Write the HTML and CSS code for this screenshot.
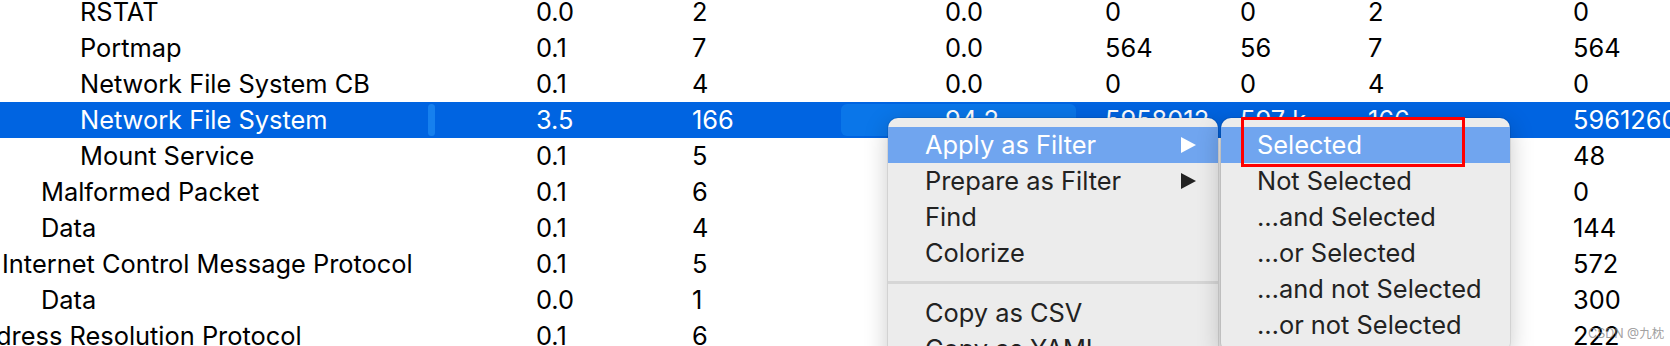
FILE: index.html
```html
<!DOCTYPE html>
<html lang="en">
    <head>
        <meta charset="UTF-8" />
        <link rel="stylesheet" href="styles.css">
        <title>Protocol Hierarchy</title>
    </head>

    <body>
        <section class="tree">
            <div class="row">
                <div class="cell name l3">RSTAT</div>
                <div class="cell">0.0</div>
                <div class="cell">2</div>
                <div class="cell pb">0.0</div>
                <div class="cell">0</div>
                <div class="cell">0</div>
                <div class="cell">2</div>
                <div class="cell">0</div>
            </div>
            <div class="row">
                <div class="cell name l3">Portmap</div>
                <div class="cell">0.1</div>
                <div class="cell">7</div>
                <div class="cell pb">0.0</div>
                <div class="cell">564</div>
                <div class="cell">56</div>
                <div class="cell">7</div>
                <div class="cell">564</div>
            </div>
            <div class="row">
                <div class="cell name l3">Network File System CB</div>
                <div class="cell">0.1</div>
                <div class="cell">4</div>
                <div class="cell pb">0.0</div>
                <div class="cell">0</div>
                <div class="cell">0</div>
                <div class="cell">4</div>
                <div class="cell">0</div>
            </div>
            <div class="row selected">
                <div class="cell name l3">Network File System<span class="handle"></span></div>
                <div class="cell">3.5</div>
                <div class="cell">166</div>
                <div class="cell pb focus">94.2</div>
                <div class="cell">5958012</div>
                <div class="cell">597 k</div>
                <div class="cell">166</div>
                <div class="cell">5961260</div>
            </div>
            <div class="row">
                <div class="cell name l3">Mount Service</div>
                <div class="cell">0.1</div>
                <div class="cell">5</div>
                <div class="cell pb">0.0</div>
                <div class="cell">48</div>
                <div class="cell">0</div>
                <div class="cell">5</div>
                <div class="cell">48</div>
            </div>
            <div class="row">
                <div class="cell name l2">Malformed Packet</div>
                <div class="cell">0.1</div>
                <div class="cell">6</div>
                <div class="cell pb">0.0</div>
                <div class="cell">0</div>
                <div class="cell">0</div>
                <div class="cell">6</div>
                <div class="cell">0</div>
            </div>
            <div class="row">
                <div class="cell name l2">Data</div>
                <div class="cell">0.1</div>
                <div class="cell">4</div>
                <div class="cell pb">0.0</div>
                <div class="cell">144</div>
                <div class="cell">0</div>
                <div class="cell">4</div>
                <div class="cell">144</div>
            </div>
            <div class="row">
                <div class="cell name l1">Internet Control Message Protocol</div>
                <div class="cell">0.1</div>
                <div class="cell">5</div>
                <div class="cell pb">0.0</div>
                <div class="cell">572</div>
                <div class="cell">0</div>
                <div class="cell">5</div>
                <div class="cell">572</div>
            </div>
            <div class="row">
                <div class="cell name l2">Data</div>
                <div class="cell">0.0</div>
                <div class="cell">1</div>
                <div class="cell pb">0.0</div>
                <div class="cell">300</div>
                <div class="cell">0</div>
                <div class="cell">1</div>
                <div class="cell">300</div>
            </div>
            <div class="row">
                <div class="cell name l0">Address Resolution Protocol</div>
                <div class="cell">0.1</div>
                <div class="cell">6</div>
                <div class="cell pb">0.0</div>
                <div class="cell">222</div>
                <div class="cell">0</div>
                <div class="cell">6</div>
                <div class="cell">222</div>
            </div>
        </section>

        <ul class="menu main-menu">
            <li class="active">Apply as Filter <svg class="arrow" width="15" height="16" viewBox="0 0 15 16"><polygon points="0,0 15,8 0,16" /></svg></li>
            <li>Prepare as Filter <svg class="arrow" width="15" height="16" viewBox="0 0 15 16"><polygon points="0,0 15,8 0,16" /></svg></li>
            <li>Find</li>
            <li>Colorize</li>
            <li class="separator"></li>
            <li>Copy as CSV</li>
            <li>Copy as YAML</li>
        </ul>

        <ul class="menu sub-menu">
            <li class="active">Selected</li>
            <li>Not Selected</li>
            <li>…and Selected</li>
            <li>…or Selected</li>
            <li>…and not Selected</li>
            <li>…or not Selected</li>
        </ul>

        <div class="mark"></div>
        <div class="watermark">CSDN @九枕</div>
    </body>
</html>
```

FILE: styles.css
```css
html,
body {
    margin: 0;
    padding: 0;
    width: 1670px;
    height: 346px;
    overflow: hidden;
    background-color: white;
}

body {
    font-family: Inter, "Liberation Sans", "Noto Sans CJK SC", sans-serif;
    font-size: 25.4px;
    color: black;
    position: relative;
}

.tree {
    margin-top: -6px;
}

.row {
    display: grid;
    grid-template-columns: 536px 156px 149px 264px 135px 128px 205px 1fr;
    height: 36px;
    line-height: 36px;
    white-space: nowrap;
}

.row.selected {
    background-color: #0064e1;
    color: white;
}

.cell {
    position: relative;
}

.cell.pb {
    padding-left: 104px;
}

.cell.focus {
    margin: 2px 29px 2px 0;
    line-height: 32px;
    background-color: #0a76e9;
    border-radius: 6px;
}

.name.l0 {
    margin-left: -37px;
}
.name.l1 {
    padding-left: 2px;
}
.name.l2 {
    padding-left: 41px;
}
.name.l3 {
    padding-left: 80px;
}

.handle {
    position: absolute;
    left: 428px;
    top: 2px;
    width: 7px;
    height: 32px;
    border-radius: 4px;
    background-color: #1680ee;
}

.menu {
    position: absolute;
    top: 118px;
    margin: 0;
    padding: 9px 0;
    list-style: none;
    background-color: #ececec;
    border-radius: 10px;
    box-shadow: 0 0 0 1px rgba(0, 0, 0, 0.08), 0 6px 24px rgba(0, 0, 0, 0.22);
    color: #222;
}

.main-menu {
    left: 888px;
    width: 330px;
}

.sub-menu {
    left: 1221px;
    width: 289px;
}

.menu li {
    height: 36px;
    line-height: 36px;
    padding-left: 37px;
    display: flex;
    align-items: center;
    white-space: nowrap;
}

.sub-menu li {
    padding-left: 36px;
}

.menu li.active {
    background-color: #70a5ef;
    color: white;
}

.menu li.separator {
    height: 3px;
    margin: 10px 0 11px;
    padding: 0;
    background-color: #d6d6d6;
}

.arrow {
    margin-left: auto;
    margin-right: 22px;
    fill: #222;
}

.active .arrow {
    fill: white;
}

.mark {
    position: absolute;
    left: 1241px;
    top: 117px;
    width: 218px;
    height: 44px;
    border: 3px solid #f00;
}

.watermark {
    position: absolute;
    left: 1588px;
    top: 323px;
    font-size: 12.5px;
    white-space: nowrap;
    color: rgba(120, 120, 120, 0.7);
}
```
